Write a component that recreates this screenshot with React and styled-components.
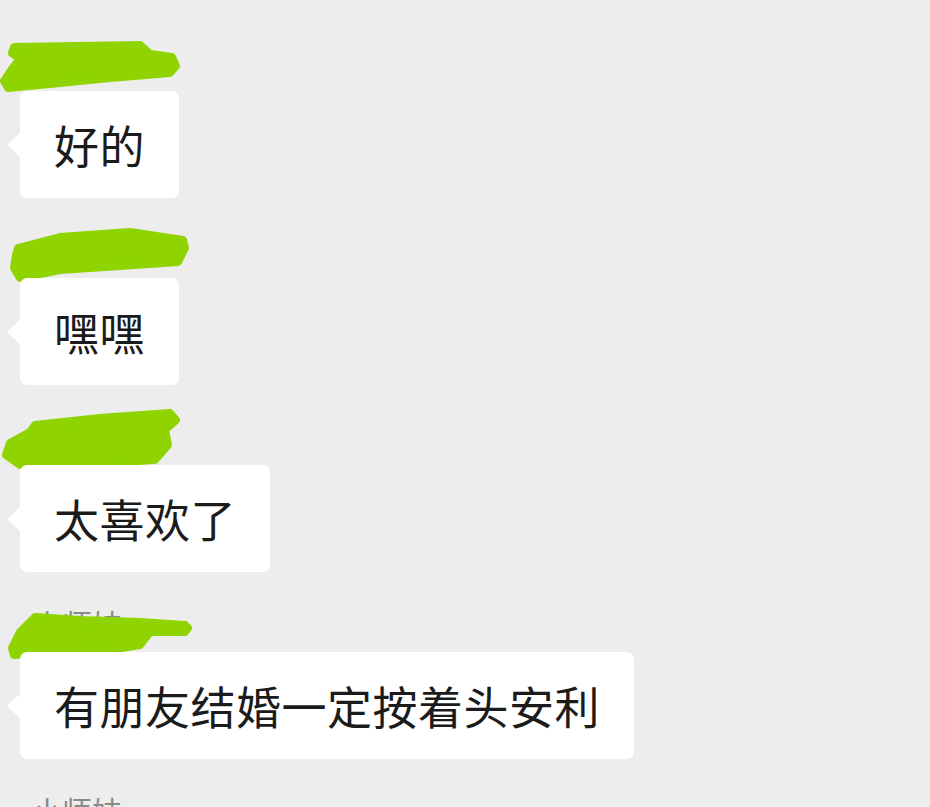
import React from "react";
import styled, { createGlobalStyle } from "styled-components";

const GlobalStyle = createGlobalStyle`
  html, body {
    margin: 0;
    padding: 0;
    background: #ededed;
  }
  body {
    font-family: "Noto Sans CJK SC", "Noto Sans", sans-serif;
    overflow: hidden;
  }
`;

const messages = [
  {
    name: "小师妹",
    text: "好的",
    blot: "M14 36 L140 34 L150 43 L172 46 L176 55 L170 62 L110 67 L60 72 L8 77 L4 70 L12 58 L20 48 L12 42 Z",
  },
  {
    name: "小师妹",
    text: "嘿嘿",
    blot: "M18 50 L60 39 L130 34 L183 42 L185 50 L178 64 L120 68 L60 72 L20 80 L14 70 L16 57 Z",
  },
  {
    name: "小师妹",
    text: "太喜欢了",
    blot: "M35 40 L100 33 L170 28 L176 35 L165 45 L168 60 L155 75 L120 77 L60 80 L20 80 L6 70 L10 58 L30 47 Z",
  },
  {
    name: "小师妹",
    text: "有朋友结婚一定按着头安利",
    blot: "M35 45 L80 48 L140 50 L185 53 L188 56 L185 60 L150 60 L140 73 L110 78 L60 80 L14 83 L12 76 L20 60 L32 48 Z",
  },
];

export default function App() {
  return (
    <Chat>
      <GlobalStyle />
      {messages.map((m, i) => (
        <Item key={i}>
          <NameRow>
            <Name>{m.name}</Name>
            <Scribble viewBox="0 0 200 90" width="200" height="90">
              <path
                d={m.blot}
                fill="#8fd400"
                stroke="#8fd400"
                strokeWidth="8"
                strokeLinejoin="round"
              />
            </Scribble>
          </NameRow>
          <Bubble>{m.text}</Bubble>
        </Item>
      ))}
      <NameRow>
        <Name>小师妹</Name>
      </NameRow>
    </Chat>
  );
}

const Chat = styled.div`
  width: 930px;
  height: 807px;
  padding-top: 11px;
  box-sizing: border-box;
  display: flex;
  flex-direction: column;
  overflow: hidden;
`;

const Item = styled.div`
  display: flex;
  flex-direction: column;
  align-items: flex-start;
`;

const NameRow = styled.div`
  position: relative;
  height: 80px;
  padding-top: 36px;
  padding-left: 32px;
  box-sizing: border-box;
`;

const Name = styled.div`
  font-size: 30px;
  line-height: 30px;
  color: #8a8a8a;
`;

const Scribble = styled.svg`
  position: absolute;
  left: 0;
  top: 0;
  overflow: visible;
`;

const Bubble = styled.div`
  position: relative;
  margin-left: 20px;
  height: 107px;
  padding: 0 34px;
  display: flex;
  align-items: center;
  background: #ffffff;
  border-radius: 7px;
  font-size: 45px;
  letter-spacing: 0.5px;
  color: #1b1b1b;
  white-space: nowrap;

  &::before {
    content: "";
    position: absolute;
    left: -13px;
    top: 50%;
    margin-top: -12px;
    border-top: 12px solid transparent;
    border-bottom: 12px solid transparent;
    border-right: 13px solid #ffffff;
  }
`;
